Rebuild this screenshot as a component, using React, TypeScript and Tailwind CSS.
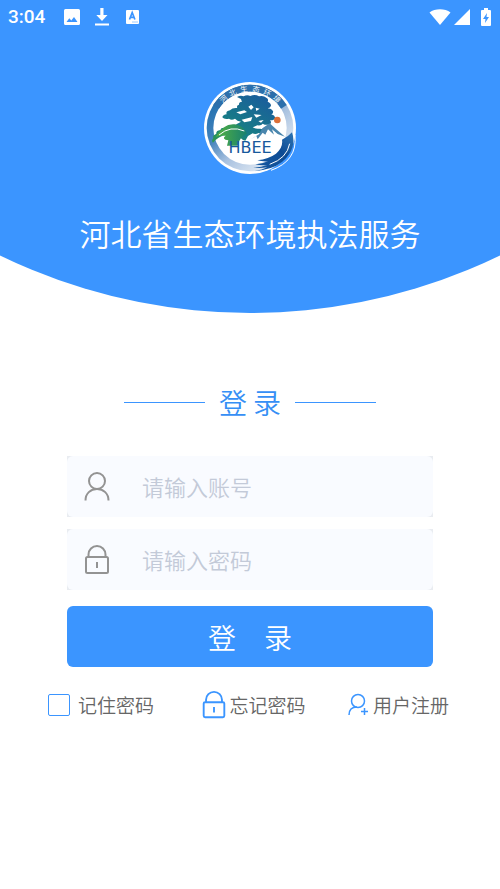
import { useState } from "react";
import type { ReactNode } from "react";

const LOGO_CHARS = [
  { char: "河", angle: -42 },
  { char: "北", angle: -26 },
  { char: "生", angle: -9 },
  { char: "态", angle: 9 },
  { char: "环", angle: 26 },
  { char: "境", angle: 43 },
];

function StatusBar() {
  return (
    <div className="flex h-[34px] items-center justify-between pr-1.5 pl-2 text-white">
      <div className="flex items-center">
        <span className="w-10 font-[Roboto,sans-serif] text-[19px] leading-6 font-medium">
          3:04
        </span>
        <svg className="ml-4 h-4 w-4" viewBox="0 0 16 16" fill="currentColor">
          <path
            fillRule="evenodd"
            d="M1.500 0h13A1.500 1.500 0 0 1 16 1.500v13a1.500 1.500 0 0 1-1.500 1.500h-13A1.500 1.500 0 0 1 0 14.500v-13A1.500 1.500 0 0 1 1.500 0ZM2.500 13h11l-3.500-5-2.700 3.500-2-2.300Z"
          />
        </svg>
        <svg className="ml-3.5 h-5 w-4" viewBox="0 0 16 20" fill="currentColor">
          <path d="M6.300 1h3.200v7h4L8 14 2.300 8h4ZM1 16.500h14v2H1Z" />
        </svg>
        <svg className="ml-3.5 h-4 w-4" viewBox="0 0 16 16">
          <rect x="2" y="1" width="13" height="14" rx="1" fill="currentColor" />
          <path
            d="m5.500 10.500 2.700-7 2.700 7M6.500 8.300h3.500"
            fill="none"
            stroke="#3b95ff"
            strokeWidth="1.700"
          />
          <path
            d="M8.500 13h1m1 0h1m1 0h1"
            fill="none"
            stroke="#3b95ff"
            strokeWidth="1"
          />
        </svg>
      </div>
      <div className="flex items-center">
        <svg className="h-4 w-6" viewBox="0 0 24 16" fill="currentColor">
          <path d="M1.500 3.500C7-.8 17-.8 22.500 3.500L12 16Z" />
        </svg>
        <svg className="ml-0.5 h-4 w-4" viewBox="0 0 16 16" fill="currentColor">
          <path d="M16 0v16H0Z" />
        </svg>
        <svg className="ml-2 h-5 w-4" viewBox="0 0 16 20" fill="currentColor">
          <path
            fillRule="evenodd"
            d="M6 1h4v2h2q1 0 1 1v14q0 1-1 1H4q-1 0-1-1V4q0-1 1-1h2ZM9 6l-4 6h2.500L7 16l4-6H8.500Z"
          />
        </svg>
      </div>
    </div>
  );
}

function Logo() {
  return (
    <svg
      className="h-[92px] w-[92px] font-normal"
      viewBox="27 21 276 276"
      role="img"
      aria-label="HBEE"
    >
      <defs>
        <linearGradient id="ring" x1="0.100" y1="0.200" x2="0.700" y2="0.900">
          <stop offset="0" stopColor="#2371b0" />
          <stop offset="0.350" stopColor="#4684bd" />
          <stop offset="0.650" stopColor="#a9c2e0" />
          <stop offset="1" stopColor="#dbe5f1" />
        </linearGradient>
        <linearGradient id="tree" x1="0" y1="1" x2="0.800" y2="0">
          <stop offset="0" stopColor="#2f9a4e" />
          <stop offset="0.350" stopColor="#177f84" />
          <stop offset="1" stopColor="#1a5d9c" />
        </linearGradient>
        <linearGradient id="hill" x1="0" y1="0" x2="1" y2="0">
          <stop offset="0" stopColor="#55b23e" />
          <stop offset="1" stopColor="#178070" />
        </linearGradient>
        <linearGradient id="ribbon" x1="1" y1="0" x2="0" y2="1">
          <stop offset="0" stopColor="#2f76b4" />
          <stop offset="0.400" stopColor="#0d4b94" />
          <stop offset="1" stopColor="#175ba3" />
        </linearGradient>
      </defs>
      <circle cx="165" cy="159" r="138" fill="#fff" />
      <circle cx="165" cy="159" r="130" fill="url(#ring)" />
      <circle cx="165" cy="159" r="110" fill="#fff" />
      <path d="M72 101a110 110 0 0 1 186 0l17-11A130 130 0 0 0 55 90Z" fill="#2c6fab" />
      <g
        fill="#fff"
        fontSize="22"
        textAnchor="middle"
        fontFamily="'Noto Sans CJK SC', sans-serif"
      >
        {LOGO_CHARS.map(({ char, angle }) => (
          <text key={char} x="165" y="49" transform={`rotate(${angle} 165 159)`}>
            {char}
          </text>
        ))}
      </g>
      <path
        fill="url(#tree)"
        d="M126 66q10-6 20-2 10-6 20-1 14-6 26 1 14-3 22 4 8 4 4 12 10 4 10 12-2 7-10 8 12 1 16 8 2 7-5 10 10 2 12 10-4 9-16 8 6 6 0 12-12 4-22-2-4 7-16 5l-14 6q10 6 20 4 10-1 14 6-4 8-16 7-10 6-18 1l-14 8-8 14-7-2q-18-20-50-16-24 4-40 24-6-6 1-14-4-8 9-13-2-9 12-11 2-9 16-6 4-8 16-4 6-5 14-2 0-6 8-8l8-5q-12-2-18-9-10 6-18 0-14 4-20-4 2-8 13-9-4-9 10-12 8-9 22-7-4-7 5-10-1-8 9-9-3-6-3-8Z"
      />
      <path
        fill="#fff"
        d="m160 95 9-6 7 8-8 8ZM182 98l12 3-10 7ZM124 112l24-6 8 5-20 7ZM140 134l32-8-4 12-20 4ZM176 118l24 2-16 8ZM190 138l16-3-8 8Z"
      />
      <path
        d="M62 186q24-42 58-38 25 4 36 28-22 8-28 36H96l4-16q-22-4-8-14-20-2-30 4Z"
        fill="url(#hill)"
      />
      <path
        d="M72 180q34-30 76-12"
        fill="none"
        stroke="#fff"
        strokeWidth="3"
      />
      <path
        d="m168 192 24-14 10-18 22-15 18 16 28 24-22-8-17-14 6 16-18-16-8 16-8-6-15 20-4-10Z"
        fill="#4a86ad"
      />
      <circle cx="247" cy="135" r="10" fill="#dc7038" />
      <path
        d="M291 172q12 34-8 64-18 30-56 43-26 8-50 10 26-5 40-12-22 4-42 1 24-1 42-8-20 2-36-2 22-2 38-9-18 1-32-3 34-4 56-20 22-18 18-42 20-10 30-22Z"
        fill="url(#ribbon)"
      />
      <path
        d="M284 206q-8 44-60 62M300 180q8 78-72 106"
        fill="none"
        stroke="#fff"
        strokeWidth="3"
      />
      <text
        x="165"
        y="235"
        textAnchor="middle"
        fontFamily="'DejaVu Sans', sans-serif"
        fontSize="48"
        fill="#17599c"
      >
        HBEE
      </text>
    </svg>
  );
}

function UserIcon() {
  return (
    <svg
      className="h-8 w-8 shrink-0"
      viewBox="0 0 32 32"
      fill="none"
      stroke="#939393"
      strokeWidth="2"
    >
      <circle cx="16" cy="10" r="8" />
      <path d="M4.500 29.500c0-7 5-11.500 11.500-11.500s11.500 4.500 11.500 11.500" />
    </svg>
  );
}

function LockIcon({ className }: { className: string }) {
  return (
    <svg
      className={className}
      viewBox="0 0 32 32"
      fill="none"
      stroke="currentColor"
      strokeWidth="2"
    >
      <rect x="5" y="13" width="22" height="16" rx="1.500" />
      <path d="M7.500 13v-2.500a8.500 8.500 0 0 1 17 0V13M16 18v6" />
    </svg>
  );
}

interface FieldProps {
  label: string;
  type: string;
  value: string;
  onChange: (value: string) => void;
  icon: ReactNode;
}

function Field({ label, type, value, onChange, icon }: FieldProps) {
  return (
    <div className="bg-[#e9ecf1]">
      <label className="flex h-[61px] items-center rounded-md bg-[#f9fbff] px-[14px]">
        {icon}
        <input
          type={type}
          aria-label={label}
          placeholder={label}
          value={value}
          onChange={(e) => onChange(e.target.value)}
          className="ml-[29px] min-w-0 flex-1 bg-transparent pb-0.5 text-[22px] leading-8 text-gray-700 outline-none placeholder:text-[#c3cad8]"
        />
      </label>
    </div>
  );
}

export default function App() {
  const [account, setAccount] = useState("");
  const [password, setPassword] = useState("");
  const [remember, setRemember] = useState(false);

  return (
    <div className="min-h-screen bg-white font-['Noto_Sans_CJK_SC',sans-serif] font-[350]">
      <header className="bg-[#3b95ff] pb-[56px] [clip-path:ellipse(114%_568px_at_50%_calc(100%_-_568px))]">
        <StatusBar />
        <div className="flex flex-col items-center pt-[48px]">
          <Logo />
          <h1 className="mt-[35px] text-[31px] leading-[48px] text-white">
            河北省生态环境执法服务
          </h1>
        </div>
      </header>

      <form
        className="mx-auto w-full px-[67px] pt-[69px]"
        onSubmit={(e) => e.preventDefault()}
      >
        <div className="flex items-center justify-center gap-[14px]">
          <span className="h-px w-[81px] bg-[#3b95ff]" />
          <h2 className="text-[28px] leading-10 text-[#368ff5]">登 录</h2>
          <span className="h-px w-[81px] bg-[#3b95ff]" />
        </div>

        <div className="mt-[34px] flex flex-col gap-3">
          <Field
            label="请输入账号"
            type="text"
            value={account}
            onChange={setAccount}
            icon={<UserIcon />}
          />
          <Field
            label="请输入密码"
            type="password"
            value={password}
            onChange={setPassword}
            icon={<LockIcon className="h-8 w-8 shrink-0 text-[#939393]" />}
          />
        </div>

        <button
          type="submit"
          className="mt-4 h-[61px] w-full rounded-md bg-[#3b95ff] text-[28px] leading-10 text-white"
        >
          登　录
        </button>
      </form>

      <div className="mt-[22px] flex items-center justify-between pr-[51px] pl-12 text-[19px] leading-8 text-[#666]">
        <label className="flex items-center gap-2">
          <input
            type="checkbox"
            checked={remember}
            onChange={(e) => setRemember(e.target.checked)}
            className="h-[22px] w-[22px] appearance-none rounded-xs border border-[#3b95ff] checked:bg-[#3b95ff]"
          />
          记住密码
        </label>
        <a href="#forgot" className="flex items-center pl-1">
          <LockIcon className="h-[30px] w-[30px] text-[#3b95ff]" />
          忘记密码
        </a>
        <a href="#register" className="flex items-center gap-0.5">
          <svg
            className="h-6 w-6"
            viewBox="0 0 24 24"
            fill="none"
            stroke="#3b95ff"
            strokeWidth="1.500"
          >
            <circle cx="11" cy="8" r="6.500" />
            <path d="M2 22c0-5 3-8 8-8M14 18.500h7M17.500 15v7" />
          </svg>
          用户注册
        </a>
      </div>
    </div>
  );
}
